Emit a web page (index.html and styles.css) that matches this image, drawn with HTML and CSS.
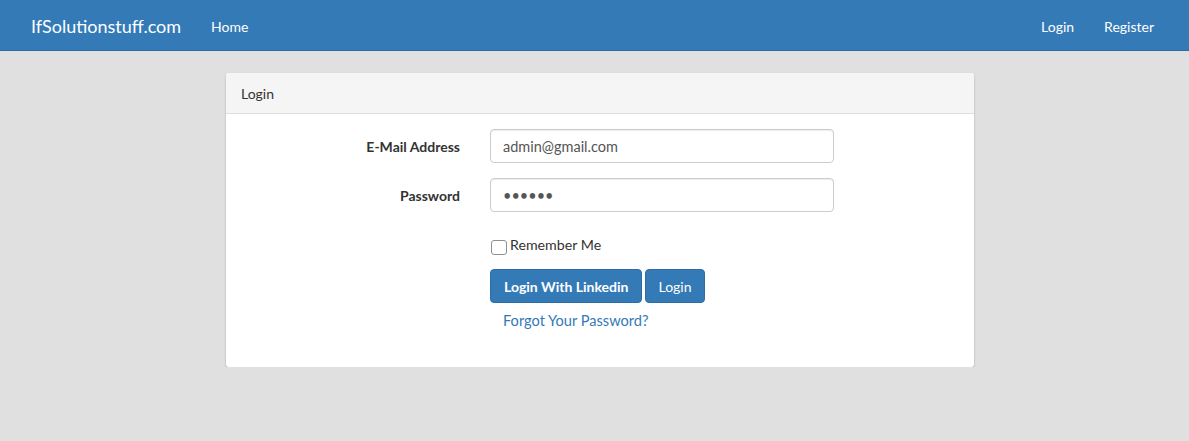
FILE: index.html
```html
<!DOCTYPE html>
<html lang="en">
<head>
<meta charset="utf-8">
<title>Login</title>
<link rel="stylesheet" href="styles.css">
</head>
<body>
<nav class="navbar">
  <div class="nav-left">
    <a class="brand" href="#">IfSolutionstuff.com</a>
    <a class="nav-link" href="#">Home</a>
  </div>
  <div class="nav-right">
    <a class="nav-link" href="#">Login</a>
    <a class="nav-link" href="#">Register</a>
  </div>
</nav>
<main class="main">
  <section class="panel">
    <div class="panel-heading">Login</div>
    <form class="panel-body">
      <div class="form-row">
        <label class="control-label" for="email">E-Mail Address</label>
        <input class="form-control" id="email" type="email" value="admin@gmail.com">
      </div>
      <div class="form-row">
        <label class="control-label" for="password">Password</label>
        <input class="form-control" id="password" type="password" value="secret">
      </div>
      <div class="form-row">
        <span class="control-label"></span>
        <label class="checkbox"><input class="check" type="checkbox">Remember Me</label>
      </div>
      <div class="form-row actions-row">
        <span class="control-label"></span>
        <div class="actions">
          <div class="buttons">
            <button type="button" class="btn btn-primary btn-bold">Login With Linkedin</button>
            <button type="button" class="btn btn-primary">Login</button>
          </div>
          <a class="btn-link" href="#">Forgot Your Password?</a>
        </div>
      </div>
    </form>
  </section>
</main>
</body>
</html>
```
FILE: styles.css
```css
* { box-sizing: border-box; }
html, body { margin: 0; padding: 0; }
body {
  background: #e0e0e0;
  font-family: Lato, "Liberation Sans", sans-serif;
  font-size: 14px;
  line-height: 1.6;
  color: #333;
}
a { text-decoration: none; }

.navbar {
  height: 51px;
  background: #337ab7;
  border-bottom: 1px solid #2e6da4;
  display: flex;
  justify-content: space-between;
  align-items: stretch;
  padding: 0 20px 0 16px;
  margin-bottom: 22px;
}
.nav-left, .nav-right { display: flex; align-items: stretch; }
.brand {
  color: #fff;
  font-size: 18px;
  line-height: 20px;
  padding: 16px 15px 14px;
}
.nav-link {
  color: #fff;
  font-size: 14px;
  line-height: 20px;
  padding: 17px 15px 13px;
}

.main {
  display: flex;
  justify-content: flex-start;
  padding-left: 226px;
}
.panel {
  width: 748px;
  background: #fff;
  border-radius: 3px;
  box-shadow: 0 1px 2px rgba(0,0,0,0.15), 0 2px 3px rgba(0,0,0,0.08);
}
.panel-heading {
  background: #f5f5f5;
  border-bottom: 1px solid #ddd;
  border-radius: 3px 3px 0 0;
  padding: 11px 15px 9px;
  line-height: 20px;
  color: #333;
}
.panel-body {
  padding: 15px 15px 31px;
  display: flex;
  flex-direction: column;
  gap: 15px;
  margin: 0;
}
.form-row {
  display: flex;
  align-items: flex-start;
  gap: 30px;
}
.actions-row { margin-top: -1px; }
.control-label {
  width: 219px;
  flex: none;
  text-align: right;
  font-weight: bold;
  padding-top: 8px;
  line-height: 20px;
}
.form-control {
  width: 344px;
  height: 34px;
  padding: 6px 12px 5px;
  font-family: inherit;
  font-size: 14.5px;
  color: #555;
  border: 1px solid #ccc;
  border-radius: 4px;
  box-shadow: inset 0 1px 1px rgba(0,0,0,0.075);
  background: #fff;
}
.checkbox {
  display: flex;
  align-items: flex-start;
  gap: 3px;
  padding-top: 8px;
  line-height: 20px;
  font-size: 14.2px;
  color: #333;
}
.check {
  appearance: none;
  -webkit-appearance: none;
  width: 16px;
  height: 15px;
  margin: 5px 0 0 1px;
  border: 1px solid #8f8f8f;
  border-radius: 3px;
  background: #fff;
}
.actions { display: flex; flex-direction: column; gap: 1px; }
.buttons { display: flex; gap: 3px; }
.btn {
  font-family: inherit;
  font-size: 14px;
  line-height: 20px;
  height: 34px;
  padding: 7px 12px 5px;
  border-radius: 4px;
  border: 1px solid #2e6da4;
  cursor: pointer;
}
.btn-primary { background: #337ab7; color: #fff; }
.btn-bold { font-weight: bold; padding: 7px 13px 5px; }
.btn-link {
  display: block;
  color: #337ab7;
  font-size: 14.6px;
  padding: 7px 13px 5px;
  line-height: 20px;
}
```
